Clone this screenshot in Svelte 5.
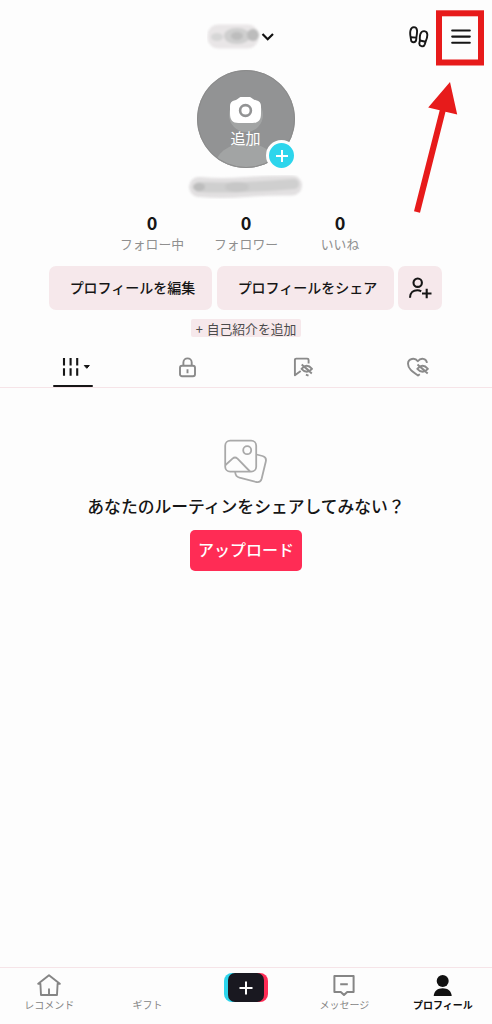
<script>
  const stats = [
    { value: 0, label: 'フォロー中' },
    { value: 0, label: 'フォロワー' },
    { value: 0, label: 'いいね' }
  ];

  const tabs = ['posts', 'private', 'saved', 'liked'];
  let activeTab = 'posts';

  const navItems = [
    { id: 'home', label: 'レコメンド' },
    { id: 'gift', label: 'ギフト' },
    { id: 'create', label: '' },
    { id: 'inbox', label: 'メッセージ' },
    { id: 'profile', label: 'プロフィール' }
  ];
  let activeNav = 'profile';
</script>

<div class="screen">
  <header class="topbar">
    <button class="account" aria-label="account">
      <svg width="54" height="28" viewBox="0 0 54 28">
        <g class="soft">
          <rect x="0.5" y="1.5" width="51" height="24" rx="11" fill="#e9e6e7" />
          <ellipse cx="10" cy="14" rx="6" ry="4" fill="#d6d6d6" />
          <ellipse cx="30" cy="13" rx="13" ry="8" fill="#cfcfcf" />
          <ellipse cx="30" cy="13" rx="6" ry="4" fill="#bdbdbd" />
          <ellipse cx="46" cy="12" rx="6" ry="6" fill="#bcbcbc" />
        </g>
      </svg>
      <svg width="14" height="10" viewBox="0 0 14 10" fill="none" stroke="#111" stroke-width="2.2">
        <path d="M1.500 2l5.200 5.200L12 2" />
      </svg>
    </button>
    <div class="actions">
      <button aria-label="footprints">
        <svg width="20" height="22" viewBox="0 0 20 22" fill="none" stroke="#161616" stroke-width="1.9" stroke-linejoin="round">
          <path d="M1.700 11.500C.8 7.500 .7 1.300 4.900 1.100C9 1.100 8.300 6.200 7.400 11.300L7.200 13.600C6.900 17.100 2.200 17 2 13.700Z" />
          <path d="M1.900 11.300L7.400 11.600" />
          <path d="M10.900 14.500C10.600 10.500 10.800 5 15.200 5.100C19.700 5.500 18.600 11 16.600 15.700L15.800 18.300C14.500 21.800 9.800 20.300 10.400 17Z" />
          <path d="M10.900 14.500L16.500 15.800" />
        </svg>
      </button>
      <button aria-label="menu">
        <svg width="20" height="18" viewBox="0 0 20 18" stroke="#161616" stroke-width="2.1" stroke-linecap="round">
          <path d="M1.200 2.500h17.600M1.200 8.600h17.600M1.200 14.800h17.600" />
        </svg>
      </button>
    </div>
  </header>

  <section class="profile">
    <button class="avatar" aria-label="avatar">
      <svg width="98" height="98" viewBox="0 0 98 98">
        <clipPath id="face"><circle cx="49" cy="49" r="49" /></clipPath>
        <g clip-path="url(#face)">
          <rect width="98" height="98" fill="#929394" />
          <circle cx="49" cy="45" r="17" fill="#a2a4a4" />
          <ellipse cx="49" cy="99" rx="32" ry="26" fill="#a2a4a4" />
        </g>
        <circle cx="49" cy="49" r="48.500" fill="none" stroke="#8b8b8b" />
        <path d="M38 30.200C41 29.800 41.500 27 44.500 27H52C55 27 55.500 29.800 59 30.200C62.500 30.700 64 33 64 36V43.500C64 50 61.500 53 55.500 53H41.500C35.500 53 33 50 33 43.500V36C33 33 34.500 30.700 38 30.200Z" fill="#fff" />
        <circle cx="48.500" cy="40.500" r="5.400" fill="#fff" stroke="#929394" stroke-width="2.600" />
      </svg>
      <span class="avatar-label">追加</span>
      <span class="badge">
        <svg width="12" height="12" viewBox="0 0 12 12" stroke="#fff" stroke-width="2"><path d="M6 0v12M0 6h12" /></svg>
      </span>
    </button>

    <svg class="handle" width="118" height="24" viewBox="0 0 118 24">
      <g class="soft">
        <path d="M12 12Q35 14 59 12T105 10.500" stroke="#e2e0e1" stroke-width="20" stroke-linecap="round" fill="none" />
        <path d="M12 12Q35 13 59 12T107 9" stroke="#cfcfcf" stroke-width="10" stroke-linecap="round" fill="none" />
        <ellipse cx="12" cy="12" rx="6" ry="4" fill="#bdbdbd" />
        <ellipse cx="50" cy="12" rx="12" ry="5" fill="#c7c7c7" />
      </g>
    </svg>

    <div class="stats">
      {#each stats as stat}
        <div class="stat">
          <strong>{stat.value}</strong>
          <span>{stat.label}</span>
        </div>
      {/each}
    </div>

    <div class="buttons">
      <button class="soft-btn edit">プロフィールを編集</button>
      <button class="soft-btn share">プロフィールをシェア</button>
      <button class="soft-btn add" aria-label="add friends">
        <svg width="24" height="22" viewBox="0 0 24 22" fill="none" stroke="#161616" stroke-width="2.100">
          <circle cx="9.700" cy="5.700" r="4.200" />
          <path d="M2 20.800C2 15.500 5.500 13.300 9.300 13.300C10.700 13.300 12 13.600 13.200 14.300M18.700 11.800V21.200M14 16.500H23.500" />
        </svg>
      </button>
    </div>

    <button class="bio">+ 自己紹介を追加</button>
  </section>

  <div class="tabs">
    {#each tabs as tab}
      <button class="tab" class:active={activeTab === tab} aria-label={tab} on:click={() => (activeTab = tab)}>
        {#if tab === 'posts'}
          <svg width="34" height="20" viewBox="-6 0 34 20">
            <path d="M2 1v7.500M8.600 1v7.500M15.200 1v7.500M2 11.200v7.500M8.600 11.200v7.500M15.200 11.200v7.500" stroke="#161616" stroke-width="2.100" />
            <path d="M22.300 8.500h5l-2.500 2.800z" fill="#161616" stroke="#161616" stroke-linejoin="round" />
          </svg>
        {:else if tab === 'private'}
          <svg width="18" height="21" viewBox="0 0 18 21" fill="none" stroke="#8a8a8a" stroke-width="1.900">
            <rect x="1" y="8.700" width="15" height="10.500" rx="2" />
            <path d="M4.400 8.500V5.500C4.400 0 12.700 0 12.700 5.500V8.500M8.500 12.200v4" />
          </svg>
        {:else if tab === 'saved'}
          <svg width="20" height="20" viewBox="0 0 20 20" fill="none" stroke="#8a8a8a" stroke-width="1.900" stroke-linejoin="round">
            <path d="M15.600 6.500V3Q15.600 1.600 14.200 1.600H3.300Q1.900 1.600 1.900 3V18.200L7.700 14" />
            <path d="M8.500 11.800Q13.800 5.600 19 11.800Q13.800 17.800 8.500 11.800ZM8.700 7.500L18.800 16.500M11.500 9.800L16 13.800M12.900 17.600l2.600 1" stroke-width="1.900" />
          </svg>
        {:else}
          <svg width="22" height="20" viewBox="0 0 22 20" fill="none" stroke="#8a8a8a" stroke-width="1.900" stroke-linejoin="round">
            <path d="M12.800 17.200L11 18.500C5 14.500 1 11.500 1 6.800C1 1.300 8 .3 10.800 4.300C13.800 .3 19.300 1.300 20 5.800" />
            <path d="M10.300 11.800Q15.600 5.600 20.900 11.800Q15.600 17.800 10.300 11.800ZM10.500 7.500L20.700 16.500M13.300 9.800L17.800 13.800" stroke-width="1.900" />
          </svg>
        {/if}
      </button>
    {/each}
  </div>

  <main class="empty">
    <svg width="44" height="45" viewBox="0 0 44 45" fill="none" stroke="#a9a9a9" stroke-width="1.800" stroke-linejoin="round">
      <rect x="1.200" y="1.700" width="31" height="31" rx="5" />
      <circle cx="23.200" cy="11.200" r="4" />
      <path d="M1.500 26L8.500 19.600Q11 17.500 13.500 19.600L26 32.500" />
      <path d="M32.500 15.500L38.500 17Q42.800 18.200 41.800 22.500L37.700 39.500Q36.500 44 32 43L15.500 38.700Q11.300 37.500 11.200 33" />
    </svg>
    <p>あなたのルーティンをシェアしてみない？</p>
    <button class="upload">アップロード</button>
  </main>

  <nav class="bottom-nav">
    {#each navItems as item}
      <button class="nav-item" class:active={activeNav === item.id} aria-label={item.id} on:click={() => (activeNav = item.id)}>
        {#if item.id === 'create'}
          <span class="create">
            <span class="create-inner">
              <svg width="14" height="14" viewBox="0 0 14 14" stroke="#fff" stroke-width="2"><path d="M7 .5v13M.5 7h13" /></svg>
            </span>
          </span>
        {:else}
          <span class="nav-icon">
            {#if item.id === 'home'}
              <svg width="24" height="24" viewBox="0 0 24 24" fill="none" stroke="#858585" stroke-width="1.900" stroke-linecap="round" stroke-linejoin="round">
                <path d="M1.200 10.800L12 2.200L22.800 10.800H20.600L20 22H4L3.400 10.800ZM12 16.200V22" />
              </svg>
            {:else if item.id === 'inbox'}
              <svg width="24" height="24" viewBox="0 0 24 24" fill="none" stroke="#858585" stroke-width="2" stroke-linejoin="round">
                <path d="M2.400 3H21.600V19H15.200L12 22L8.800 19H2.400ZM8.200 11.300h7.600" />
              </svg>
            {:else if item.id === 'profile'}
              <svg width="24" height="24" viewBox="0 0 24 24" fill="#111">
                <circle cx="11.700" cy="8" r="6" />
                <path d="M2.700 23C3 18 6.700 15.300 11.700 15.300S20.400 18 20.700 23Z" />
              </svg>
            {/if}
          </span>
          <span class="nav-label">{item.label}</span>
        {/if}
      </button>
    {/each}
  </nav>

  <!-- callout pointing at the menu button -->
  <svg class="callout" width="80" height="216" viewBox="412 0 80 216">
    <rect x="439" y="13.300" width="42" height="49.200" fill="none" stroke="#e71b1b" stroke-width="6" />
    <path d="M450 82L457.200 114.500L445.500 111.800L420 212.700L414 211.300L439.700 110.300L428.200 107.500Z" fill="#e71b1b" />
  </svg>
</div>

<style>
  :global(body) {
    margin: 0;
    background: #fdfdfd;
  }
  .screen {
    position: relative;
    display: flex;
    flex-direction: column;
    width: 492px;
    height: 1024px;
    overflow: hidden;
    background: #fdfdfd;
    color: #161616;
    font-family: 'Noto Sans CJK JP', sans-serif;
  }
  button {
    padding: 0;
    border: 0;
    background: none;
    color: inherit;
    font: inherit;
    cursor: pointer;
  }
  svg {
    display: block;
    flex-shrink: 0;
  }
  .soft {
    filter: blur(1.3px);
  }
  .topbar {
    display: grid;
    grid-template-columns: 1fr auto 1fr;
    align-items: center;
    box-sizing: border-box;
    height: 70px;
    padding: 4px 21px 0 10px;
  }
  .account {
    grid-column: 2;
    display: flex;
    align-items: center;
  }
  .actions {
    display: flex;
    justify-content: flex-end;
    gap: 22px;
    align-items: center;
  }
  .profile {
    display: flex;
    flex-direction: column;
    align-items: center;
  }
  .avatar {
    position: relative;
    width: 98px;
    height: 98px;
  }
  .avatar-label {
    position: absolute;
    top: 57px;
    left: 0;
    width: 97px;
    color: #fff;
    font-size: 15px;
    line-height: 22px;
    text-align: center;
  }
  .badge {
    position: absolute;
    right: -2px;
    bottom: -3px;
    display: grid;
    place-items: center;
    width: 25px;
    height: 25px;
    border: 3px solid #fdfdfd;
    border-radius: 50%;
    background: #2dd5ec;
  }
  .handle {
    margin-top: 7px;
  }
  .stats {
    display: flex;
    margin-top: 12px;
  }
  .stat {
    display: flex;
    flex-direction: column;
    align-items: center;
    width: 94px;
  }
  .stat strong {
    font-size: 18px;
    line-height: 22px;
  }
  .stat span {
    margin-top: 1px;
    color: #8f8f8f;
    font-size: 12.8px;
    line-height: 20px;
  }
  .buttons {
    display: flex;
    gap: 4.5px;
    margin: 12px 1px 0 0;
  }
  .soft-btn {
    display: grid;
    place-items: center;
    height: 44px;
    padding-bottom: 2px;
    border-radius: 7px;
    background: #f6e8eb;
    font-size: 14px;
    font-weight: 500;
  }
  .edit {
    width: 163px;
    padding-left: 4px;
  }
  .share {
    width: 177px;
    padding-left: 5px;
  }
  .add {
    width: 44px;
    padding-bottom: 0;
  }
  .bio {
    width: 110px;
    height: 18px;
    margin-top: 9px;
    border-radius: 2px;
    background: #f6e8eb;
    color: #4b4b4b;
    font-size: 12.800px;
    line-height: 17px;
    white-space: nowrap;
    word-spacing: 1px;
  }
  .tabs {
    display: grid;
    grid-template-columns: repeat(4, 1fr);
    height: 50px;
    padding: 0 16.5px 0 15.5px;
    border-bottom: 1px solid #f6e4e8;
  }
  .tab {
    display: flex;
    flex-direction: column;
    align-items: center;
    justify-content: center;
    padding-top: 10px;
  }
  .tab.active::after {
    content: '';
    width: 40px;
    height: 2px;
    margin: 8px 0 -10px;
    border-radius: 1px;
    background: #161616;
  }
  .empty {
    display: flex;
    flex: 1;
    flex-direction: column;
    align-items: center;
    padding-top: 50.5px;
  }
  .empty p {
    margin: 10.5px 0 11px;
    font-size: 16.8px;
    font-weight: 500;
    line-height: 25px;
  }
  .upload {
    width: 112px;
    height: 41px;
    padding-bottom: 3px;
    border-radius: 5px;
    background: #ff2c55;
    color: #fff;
    font-size: 16px;
    font-weight: 500;
  }
  .bottom-nav {
    display: grid;
    grid-template-columns: repeat(5, 1fr);
    box-sizing: border-box;
    height: 57px;
    border-top: 1px solid #f6e4e8;
  }
  .nav-item {
    display: flex;
    flex-direction: column;
    align-items: center;
    padding-top: 5px;
    color: #858585;
  }
  .nav-icon {
    height: 24px;
  }
  .nav-label {
    font-size: 10px;
    line-height: 16px;
  }
  .nav-item.active {
    color: #111;
    font-weight: 700;
  }
  .create {
    box-sizing: border-box;
    width: 44px;
    height: 29px;
    padding: 0 4px;
    border-radius: 8px;
    background: linear-gradient(90deg, #2dd5ec 50%, #ff2c55 50%);
  }
  .create-inner {
    display: grid;
    place-items: center;
    height: 29px;
    border-radius: 7px;
    background: #191820;
  }
  .callout {
    position: absolute;
    top: 0;
    right: 0;
    pointer-events: none;
  }
</style>
